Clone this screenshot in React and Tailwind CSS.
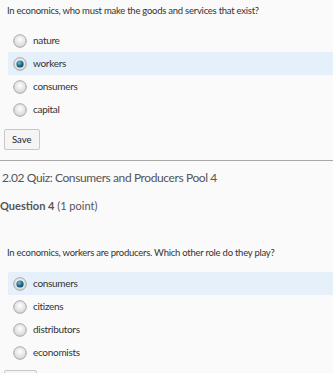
import React from "react";

const F = "Lato, sans-serif";

function Radio({ checked }) {
  return (
    <svg width="14" height="14" viewBox="0 0 14 14" className="shrink-0">
      <defs>
        <radialGradient id="rg" cx="50%" cy="40%" r="60%">
          <stop offset="0%" stopColor="#ffffff" />
          <stop offset="100%" stopColor="#d4d4d4" />
        </radialGradient>
        <radialGradient id="dot" cx="40%" cy="35%" r="70%">
          <stop offset="0%" stopColor="#6fc2e0" />
          <stop offset="55%" stopColor="#1f6f93" />
          <stop offset="100%" stopColor="#0d3f5a" />
        </radialGradient>
      </defs>
      <circle cx="7" cy="7" r="6.3" fill="url(#rg)" stroke="#a8a8a8" strokeWidth="1" />
      {checked && <circle cx="7" cy="7" r="3.6" fill="url(#dot)" />}
    </svg>
  );
}

function Option({ label, checked }) {
  return (
    <div className={`flex items-center h-[23px] pl-[5px] ${checked ? "bg-[#e5f0fb]" : ""}`}>
      <Radio checked={checked} />
      <span className="ml-[6px] text-[10px] tracking-[-0.3px] text-[#333] whitespace-nowrap">{label}</span>
    </div>
  );
}

export default function App() {
  return (
    <div className="w-[333px] h-[373px] overflow-hidden bg-[#fafafa]" style={{ fontFamily: F }}>
      <div className="pl-[7px] pt-[4px] text-[9.5px] tracking-[-0.25px] text-[#333] leading-[14px] whitespace-nowrap">
        In economics, who must make the goods and services that exist?
      </div>
      <div className="ml-[8px] mt-[11px] flex flex-col">
        <Option label="nature" />
        <Option label="workers" checked />
        <Option label="consumers" />
        <Option label="capital" />
      </div>
      <div className="flex pl-[4px] mt-[8px]">
        <button className="h-[21px] px-[7px] border border-[#c8c8c8] rounded-[2px] bg-[#f5f5f5] text-[9.5px] text-[#222] leading-none">
          Save
        </button>
      </div>
      <div className="mt-[10px] border-t border-[#a8a8a8]" />
      <div className="pl-[2px] mt-[8px] text-[12px] tracking-[-0.4px] text-[#555] leading-[18px] whitespace-nowrap">
        2.02 Quiz: Consumers and Producers Pool 4
      </div>
      <div className="mt-[12px] text-[11px] text-[#555] leading-[14px] whitespace-nowrap">
        <span className="font-bold">Question 4</span> (1 point)
      </div>
      <div className="pl-[7px] mt-[33px] text-[9.5px] tracking-[-0.25px] text-[#333] leading-[14px] whitespace-nowrap">
        In economics, workers are producers. Which other role do they play?
      </div>
      <div className="ml-[8px] mt-[12px] flex flex-col">
        <Option label="consumers" checked />
        <Option label="citizens" />
        <Option label="distributors" />
        <Option label="economists" />
      </div>
      <div className="flex pl-[4px] mt-[6px]">
        <div className="w-[33px] h-[10px] border border-[#c8c8c8] rounded-[2px] bg-[#f5f5f5]" />
      </div>
    </div>
  );
}
